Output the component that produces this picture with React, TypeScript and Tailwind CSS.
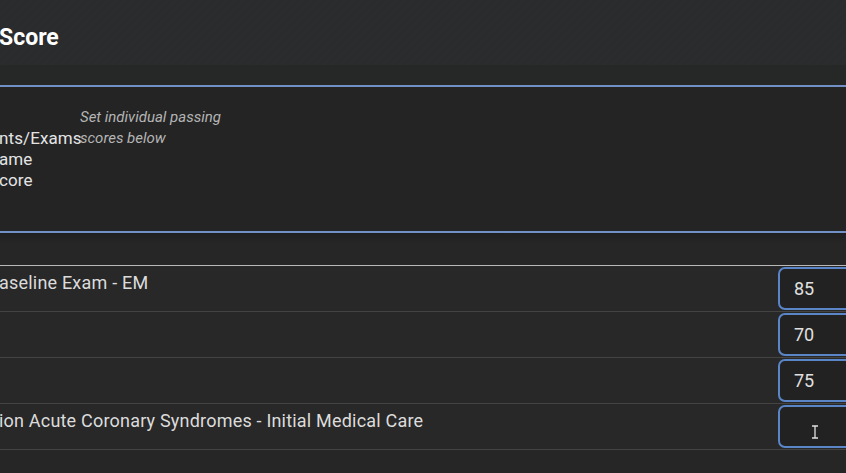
import React from "react";

const rows = [
  { name: "aseline Exam - EM", value: "85" },
  { name: "", value: "70" },
  { name: "", value: "75" },
  { name: "ion Acute Coronary Syndromes - Initial Medical Care", value: "" },
];

export default function App() {
  return (
    <div className="w-[846px] h-[473px] overflow-hidden bg-[#262626] font-['Roboto',_'Liberation_Sans',_sans-serif]">
      <div className="h-[65px] flex items-center pt-[10px] bg-[repeating-linear-gradient(135deg,#2a2b2c_0px,#2a2b2c_3px,#2b2c2d_3px,#2b2c2d_6px)]">
        <h1 className="text-[23px] font-bold text-white leading-none -ml-[1px]">Score</h1>
      </div>
      <div className="h-[20px] bg-[#262727]" />
      <div className="h-[148px] border-y-2 border-[#7090c6] bg-[#242424] flex">
        <div className="w-[80px] shrink-0 flex flex-col justify-center text-[17px] leading-[21px] text-[#e4e4e4] whitespace-nowrap pt-[1px] tracking-[0.1px]">
          <span className="-ml-[1px]">nts/Exams</span>
          <span className="-ml-[1px]">ame</span>
          <span className="-ml-[1px]">core</span>
        </div>
        <div className="pt-[20px] text-[15px] italic leading-[21px] text-[#b4b4b4] w-[170px]">
          Set individual passing scores below
        </div>
      </div>
      <div className="h-[32px] bg-[linear-gradient(180deg,#1f1f1f_0px,#262626_10px,#262626_32px)]" />
      <div className="border-t border-[#b8b8b8]">
        {rows.map((r, i) => (
          <div
            key={i}
            className="h-[46px] border-b border-[#444444] bg-[#282828] flex items-start"
          >
            <div className="flex-1 pt-[6px] text-[18px] leading-[22px] text-[#dcdcdc] whitespace-nowrap -ml-[1px] tracking-[0.2px]">
              {r.name}
            </div>
            <div className="relative mt-[1px] w-[90px] h-[43px] -mr-[22px] rounded-[7px] border-2 border-[#5a86c8] bg-[#222222] flex items-center pl-[14px] text-[18px] text-[#e0e0e0]">
              {r.value}
              {r.value === "" && (
                <svg
                  className="absolute left-[31px] top-[18px]"
                  width="8"
                  height="14"
                  viewBox="0 0 8 14"
                >
                  <path d="M1 1h6M4 1v12M1 13h6" stroke="#e0e0e0" strokeWidth="1.3" fill="none" />
                </svg>
              )}
            </div>
          </div>
        ))}
      </div>
    </div>
  );
}
